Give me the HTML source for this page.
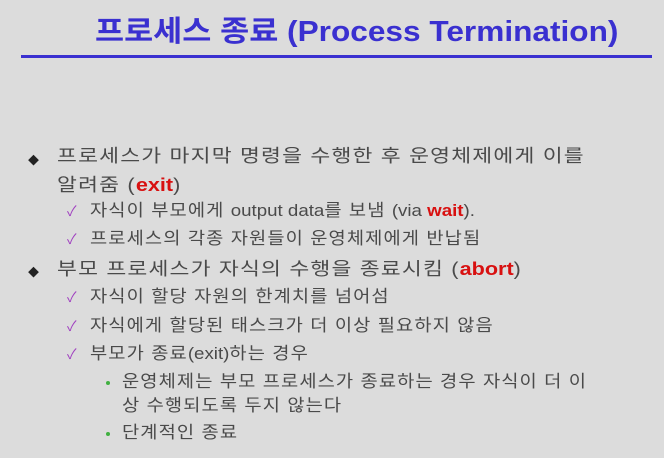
<!DOCTYPE html>
<html><head><meta charset="utf-8"><style>
body{margin:0;width:664px;height:458px;background:#dcdcdc;overflow:hidden;position:relative;font-family:"Liberation Sans","Noto Sans CJK KR","NanumGothic",sans-serif;color:#4a4a4a}
.t{position:absolute;left:95px;top:8px;font-size:29px;font-weight:bold;color:#3a30d0;white-space:nowrap;transform-origin:0 0;transform:scaleX(1.09)}
.hr{position:absolute;left:21px;top:55px;width:631px;height:3px;background:#3a30d0}
.l{position:absolute;white-space:nowrap;font-size:18px;line-height:20px;letter-spacing:1px;transform-origin:0 0;transform:scaleX(1.2)}
.s{font-size:17px;letter-spacing:1px;transform:scaleX(1.1)}
.e{letter-spacing:0}
.r{color:#d81010;font-weight:bold;letter-spacing:0}
.b1{position:absolute;font-size:11px;color:#222}
.ck{position:absolute;color:#a040c0;font-size:14px}
.dot{position:absolute;width:4px;height:4px;border-radius:2px;background:#40b040}
</style></head><body>
<div class="t">프로세스 종료 (Process Termination)</div>
<div class="hr"></div>
<div class="b1" style="left:28px;top:152px">◆</div>
<div class="l" style="left:57px;top:146px">프로세스가 마지막 명령을 수행한 후 운영체제에게 이를</div>
<div class="l" style="left:57px;top:175px">알려줌 (<span class="r">exit</span>)</div>
<div class="ck" style="left:67px;top:201px">✓</div>
<div class="l s" style="left:90px;top:201px">자식이 부모에게 <span class="e">output data</span>를 보냄 <span class="e">(via </span><span class="r">wait</span><span class="e">).</span></div>
<div class="ck" style="left:67px;top:229px">✓</div>
<div class="l s" style="left:90px;top:229px">프로세스의 각종 자원들이 운영체제에게 반납됨</div>
<div class="b1" style="left:28px;top:264px">◆</div>
<div class="l" style="left:57px;top:259px">부모 프로세스가 자식의 수행을 종료시킴 (<span class="r">abort</span>)</div>
<div class="ck" style="left:67px;top:287px">✓</div>
<div class="l s" style="left:90px;top:287px">자식이 할당 자원의 한계치를 넘어섬</div>
<div class="ck" style="left:67px;top:316px">✓</div>
<div class="l s" style="left:90px;top:316px">자식에게 할당된 태스크가 더 이상 필요하지 않음</div>
<div class="ck" style="left:67px;top:344px">✓</div>
<div class="l s" style="left:90px;top:344px">부모가 종료<span class="e">(exit)</span>하는 경우</div>
<div class="dot" style="left:106px;top:381px"></div>
<div class="l s" style="left:122px;top:372px">운영체제는 부모 프로세스가 종료하는 경우 자식이 더 이</div>
<div class="l s" style="left:122px;top:396px">상 수행되도록 두지 않는다</div>
<div class="dot" style="left:106px;top:432px"></div>
<div class="l s" style="left:122px;top:423px">단계적인 종료</div>
</body></html>
